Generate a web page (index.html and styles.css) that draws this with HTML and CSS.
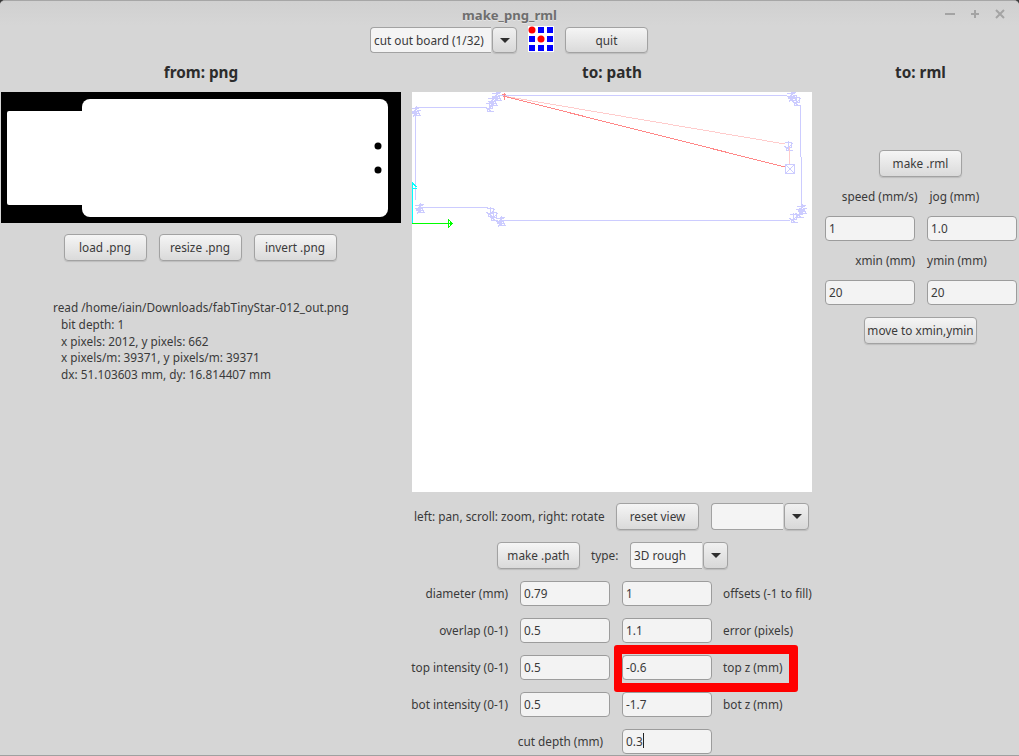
FILE: index.html
```html
<!DOCTYPE html>
<html lang="en">

<head>
    <meta charset="UTF-8">
    <meta name="viewport" content="width=device-width, initial-scale=1.0">
    <title>make_png_rml</title>

    <link rel="stylesheet" href="styles.css">

</head>

<body>

    <div class="window">

        <div class="titlebar">
            <span class="title">make_png_rml</span>
            <div class="win_buttons">
                <svg viewBox="0 0 10 10" class="win_icon"><path d="M0 5H10"/></svg>
                <svg viewBox="0 0 10 10" class="win_icon"><path d="M1 5H9M5 1V9"/></svg>
                <svg viewBox="0 0 10 10" class="win_icon"><path d="M1 1L9 9M9 1L1 9"/></svg>
            </div>
        </div>

        <div class="toolbar">
            <div class="combo combo_top">
                <span class="combo_text">cut out board (1/32)</span>
                <span class="combo_arrow"></span>
            </div>
            <svg class="logo" viewBox="0 0 26 26">
                <rect width="26" height="26" fill="#fff"/>
                <g fill="#0000ff">
                    <rect x="10" y="1" width="6" height="6"/>
                    <rect x="19" y="1" width="6" height="6"/>
                    <rect x="1" y="10" width="6" height="6"/>
                    <rect x="19" y="10" width="6" height="6"/>
                    <rect x="1" y="19" width="6" height="6"/>
                    <rect x="10" y="19" width="6" height="6"/>
                    <rect x="19" y="19" width="6" height="6"/>
                </g>
                <circle cx="4" cy="4" r="3.5" fill="#ff0000"/>
                <circle cx="13" cy="13" r="3.5" fill="#ff0000"/>
            </svg>
            <button class="btn">quit</button>
        </div>

        <div class="columns">

            <!-- png -->
            <div class="col col_left">
                <h2>from: png</h2>
                <svg class="png_view" viewBox="0 0 400 131">
                    <rect width="400" height="131" fill="#000"/>
                    <rect x="6" y="19" width="90" height="94" rx="2" fill="#fff"/>
                    <rect x="81" y="7" width="306" height="118" rx="8" fill="#fff"/>
                    <circle cx="377" cy="54" r="3.5" fill="#000"/>
                    <circle cx="377" cy="78" r="3.5" fill="#000"/>
                </svg>
                <div class="btn_row">
                    <button class="btn">load .png</button>
                    <button class="btn">resize .png</button>
                    <button class="btn">invert .png</button>
                </div>
                <div class="info">
                    <p>read /home/iain/Downloads/fabTinyStar-012_out.png</p>
                    <p class="indent">bit depth: 1</p>
                    <p class="indent">x pixels: 2012, y pixels: 662</p>
                    <p class="indent">x pixels/m: 39371, y pixels/m: 39371</p>
                    <p class="indent">dx: 51.103603 mm, dy: 16.814407 mm</p>
                </div>
            </div>

            <!-- path -->
            <div class="col col_mid">
                <h2>to: path</h2>
                <svg class="path_view" viewBox="0 0 400 400" shape-rendering="crispEdges">
                    <defs>
                        <path id="tangle" d="M0 3L9 1L2 6L10 4L1 8L8 7L3 10L6 0M2 9L9 9L4 1M7 10L0 5"/>
                        <path id="tangle2" d="M1 1H7V6H2V9H9M4 0V7M9 2L3 8M0 5L6 9"/>
                    </defs>
                    <g class="toolpath">
                        <path d="M3.5 108V20M3.5 15.5H75M88 3.5H375M388.5 13V65M389.5 65V113M378 128.5H88M76 115.5H8"/>
                        <use href="#tangle" x="-1" y="14"/>
                        <use href="#tangle2" x="73" y="10"/>
                        <use href="#tangle" x="76" y="4"/>
                        <use href="#tangle" x="80" y="-1"/>
                        <use href="#tangle" x="3" y="111"/>
                        <use href="#tangle2" x="74" y="115"/>
                        <use href="#tangle2" x="77" y="119"/>
                        <use href="#tangle" x="84" y="124"/>
                        <use href="#tangle" x="375" y="-1"/>
                        <use href="#tangle2" x="380" y="4"/>
                        <use href="#tangle" x="385" y="112"/>
                        <use href="#tangle2" x="383" y="116"/>
                        <use href="#tangle2" x="377" y="121"/>
                        <use href="#tangle2" x="372" y="49"/>
                        <path d="M373.5 72.5H382.5V81.5H373.5ZM373.5 72.5L382.5 81.5M382.5 72.5L373.5 81.5"/>
                    </g>
                    <path class="move_light" d="M91 4L373 52M377.5 55V72"/>
                    <path class="move_dark" d="M91 4L373 75M90 2.5H94M92.5 1V8"/>
                    <path class="axis_y" d="M0.5 131V91L4.5 95M1 96.5H5"/>
                    <path class="axis_x" d="M0 131.5H40M36.5 127V136M37 128L40 131.5L37 135"/>
                </svg>
                <div class="view_row">
                    <span class="view_hint">left: pan, scroll: zoom, right: rotate</span>
                    <button class="btn">reset view</button>
                    <div class="combo combo_view">
                        <span class="combo_text"></span>
                        <span class="combo_arrow"></span>
                    </div>
                </div>
                <div class="type_row">
                    <button class="btn">make .path</button>
                    <span class="type_lbl">type:</span>
                    <div class="combo combo_type">
                        <span class="combo_text">3D rough</span>
                        <span class="combo_arrow"></span>
                    </div>
                </div>
                <div class="form_grid">
                    <label class="lbl_right">diameter (mm)</label>
                    <input class="field" type="text" value="0.79">
                    <input class="field" type="text" value="1">
                    <label>offsets (-1 to fill)</label>

                    <label class="lbl_right">overlap (0-1)</label>
                    <input class="field" type="text" value="0.5">
                    <input class="field" type="text" value="1.1">
                    <label>error (pixels)</label>

                    <label class="lbl_right">top intensity (0-1)</label>
                    <input class="field" type="text" value="0.5">
                    <div class="highlighted">
                        <input class="field" type="text" value="-0.6">
                        <span class="red_box"></span>
                    </div>
                    <label class="over_red">top z (mm)</label>

                    <label class="lbl_right">bot intensity (0-1)</label>
                    <input class="field" type="text" value="0.5">
                    <input class="field" type="text" value="-1.7">
                    <label>bot z (mm)</label>

                    <label class="lbl_right lbl_wide">cut depth (mm)</label>
                    <div class="field field_caret">0.3<span class="caret"></span></div>
                </div>
            </div>

            <!-- rml -->
            <div class="col col_right">
                <h2>to: rml</h2>
                <button class="btn btn_make">make .rml</button>
                <div class="rml_labels">
                    <span>speed (mm/s)</span>
                    <span>jog (mm)</span>
                </div>
                <div class="rml_fields">
                    <input class="field" type="text" value="1">
                    <input class="field" type="text" value="1.0">
                </div>
                <div class="rml_labels labels_min">
                    <span>xmin (mm)</span>
                    <span>ymin (mm)</span>
                </div>
                <div class="rml_fields">
                    <input class="field" type="text" value="20">
                    <input class="field" type="text" value="20">
                </div>
                <button class="btn btn_move">move to xmin,ymin</button>
            </div>

        </div>
    </div>

</body>

</html>
```

FILE: styles.css
```css
* {
    box-sizing: border-box;
    font-family: 'Noto Sans', 'Open Sans', sans-serif;
}

html,
body {
    margin: 0;
    height: 100%;
    background-color: #3a3a3a;
}

.window {
    width: 1019px;
    height: 756px;
    overflow: hidden;
    background-color: #d6d6d6;
    border-top: 1px solid #a6a6a6;
    border-bottom: 1px solid #a0a0a0;
    border-radius: 5px 5px 0 0;
    font-size: 11.8px;
    color: #3a3a3a;
}

/* title bar */
.titlebar {
    position: relative;
    height: 25px;
    display: flex;
    align-items: center;
    justify-content: center;
    background: linear-gradient(#d0d0d0, #d6d6d6);
}

.title {
    font-weight: bold;
    font-size: 13.1px;
    color: #6e6e6e;
    text-shadow: 0 1px 0 #e4e4e4;
    margin-top: 2px;
}

.win_buttons {
    position: absolute;
    top: 8px;
    right: 14px;
    display: flex;
    gap: 15px;
}

.win_icon {
    width: 10px;
    height: 10px;
    fill: none;
    stroke: #a4a4a4;
    stroke-width: 2;
}

/* buttons and combos */
.btn {
    height: 27px;
    width: 83px;
    padding: 0 0 2px;
    font-size: 11.8px;
    color: #3a3a3a;
    border: 1px solid #a2a2a2;
    border-radius: 4px;
    background: linear-gradient(#f5f5f5, #dadada);
    box-shadow: 0 1px 1px rgba(0, 0, 0, 0.12);
}

.combo {
    display: flex;
    height: 27px;
}

.combo_text {
    flex: 1;
    display: flex;
    align-items: center;
    padding: 0 0 2px 3px;
    white-space: nowrap;
    background-color: #f4f4f4;
    border: 1px solid #a2a2a2;
    border-right: none;
    border-radius: 4px 0 0 4px;
}

.combo_arrow {
    width: 25px;
    margin-left: 1px;
    display: flex;
    align-items: center;
    justify-content: center;
    border: 1px solid #a2a2a2;
    border-radius: 4px;
    background: linear-gradient(#f0f0f0, #d8d8d8);
    box-shadow: 0 1px 1px rgba(0, 0, 0, 0.12);
}

.combo_arrow::after {
    content: "";
    border-left: 5px solid transparent;
    border-right: 5px solid transparent;
    border-top: 5px solid #2e2e2e;
}

.combo_top {
    width: 147px;
}

.combo_view {
    width: 98px;
}

.combo_type {
    width: 98px;
}

.field {
    width: 90px;
    height: 25px;
    padding: 0 3px 2px;
    font-size: 11.8px;
    color: #3a3a3a;
    background-color: #f3f3f3;
    border: 1px solid #9c9c9c;
    border-radius: 4px;
    outline: none;
}

.field_caret {
    display: flex;
    align-items: center;
}

.caret {
    width: 1px;
    height: 15px;
    background-color: #222;
}

/* top row */
.toolbar {
    height: 28px;
    display: flex;
    align-items: flex-start;
    padding-top: 1px;
    padding-left: 370px;
    gap: 11px;
}

.toolbar .btn,
.toolbar .combo {
    height: 26px;
}

.toolbar .btn,
.toolbar .combo_text {
    padding-bottom: 0;
}

.logo {
    width: 26px;
    height: 26px;
    margin-top: -1px;
}

/* columns */
.columns {
    display: flex;
    padding-left: 1px;
}

.col h2 {
    margin: 0;
    height: 38px;
    line-height: 36px;
    font-size: 15.3px;
    font-weight: bold;
    text-align: center;
    color: #2c2c2c;
}

.col_left {
    width: 400px;
}

.col_mid {
    width: 400px;
    margin-left: 11px;
}

.col_right {
    width: 192px;
    margin-left: 13px;
    display: flex;
    flex-direction: column;
    align-items: center;
}

.col_right h2 {
    width: 100%;
    padding-right: 1px;
}

.png_view {
    display: block;
    width: 400px;
    height: 131px;
}

.btn_row {
    display: flex;
    justify-content: center;
    gap: 12px;
    margin-top: 11px;
    padding-right: 2px;
}

.info {
    margin-top: 38px;
    margin-left: 52px;
}

.info p {
    margin: 0;
    line-height: 16.8px;
}

.indent {
    padding-left: 8px;
}

/* path view */
.path_view {
    display: block;
    width: 400px;
    height: 400px;
    background-color: #fff;
}

.toolpath {
    fill: none;
    stroke: #ccccff;
    stroke-width: 1;
}

.move_light {
    fill: none;
    stroke: #ffcccc;
}

.move_dark {
    fill: none;
    stroke: #ff8888;
}

.axis_y {
    fill: none;
    stroke: #00ffff;
}

.axis_x {
    fill: none;
    stroke: #00ff00;
}

.view_row {
    display: flex;
    align-items: center;
    margin-top: 11px;
    margin-left: 2px;
}

.view_hint {
    width: 202px;
    padding-bottom: 2px;
    white-space: nowrap;
}

.view_row .combo {
    margin-left: 12px;
}

.type_row {
    display: flex;
    align-items: center;
    margin-top: 12px;
    margin-left: 85px;
}

.type_lbl {
    width: 28px;
    margin-left: 11px;
    margin-right: 11px;
    padding-bottom: 2px;
}

/* form */
.form_grid {
    display: grid;
    grid-template-columns: 98px 90px 90px auto;
    column-gap: 12px;
    row-gap: 12px;
    margin-top: 12px;
    margin-left: -2px;
    align-items: center;
}

.form_grid label {
    white-space: nowrap;
    margin-left: -1px;
    padding-bottom: 2px;
}

.form_grid .lbl_right {
    text-align: right;
    margin-left: 0;
}

.form_grid .lbl_wide {
    grid-column: 1 / span 2;
    padding-right: 7px;
}

.highlighted {
    position: relative;
    height: 25px;
}

.highlighted .field {
    position: relative;
    z-index: 1;
}

.red_box {
    position: absolute;
    left: -8px;
    top: -10px;
    width: 184px;
    height: 47px;
    border: 9px solid #ff0000;
    border-left-width: 8px;
    border-radius: 3px;
}

/* rml */
.btn_make {
    margin-top: 58px;
    margin-right: 1px;
}

.rml_labels {
    width: 100%;
    display: flex;
    justify-content: center;
    gap: 12px;
    margin-top: 11px;
    padding-right: 21px;
    height: 17px;
    line-height: 17px;
}

.labels_min {
    padding-right: 0;
}

.rml_fields {
    width: 100%;
    display: flex;
    gap: 12px;
    margin-top: 11px;
}

.btn_move {
    width: 113px;
    margin-top: 12px;
    margin-right: 1px;
}
```
